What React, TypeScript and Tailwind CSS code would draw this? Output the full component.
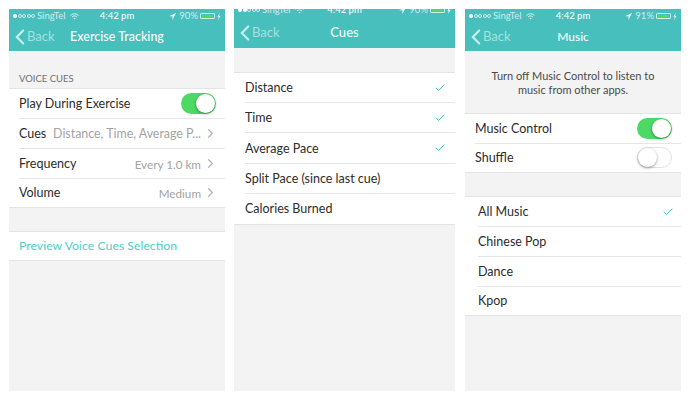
import { ChevronLeft, ChevronRight, Check } from 'lucide-react';

interface StatusProps {
  battery: string;
  fill: number;
  dots: number;
  clipped?: boolean;
}

function StatusBar({ battery, fill, dots, clipped }: StatusProps) {
  return (
    <div className={`flex justify-between pl-[4px] pr-[4px] text-[9.5px] leading-[12px] text-[#cfeeec] ${clipped ? 'h-[7px] items-end overflow-hidden' : 'mt-[1px] h-[12px] items-center'}`}>
      <div className="flex w-[70px] shrink-0 items-center gap-[2px] whitespace-nowrap">
        <div className="flex gap-[0.5px]">
          {[0, 1, 2, 3, 4].map((i) => (
            <span key={i} className={`h-[4px] w-[4px] rounded-full ${i < dots ? 'bg-white' : 'border-[0.5px] border-[#cfeeec]'}`} />
          ))}
        </div>
        <span>SingTel</span>
        <svg width="9" height="7" viewBox="0 0 9 7" className="ml-[3px]">
          <path d="M0.5 2.5a5.5 5.5 0 0 1 8 0M2 4a3.4 3.4 0 0 1 5 0" stroke="#e8f8f6" strokeWidth="0.9" fill="none" />
          <path d="M3.4 5.3a1.5 1.5 0 0 1 2.2 0L4.5 6.6z" fill="#e8f8f6" />
        </svg>
      </div>
      <span className="font-medium text-[#f2fbfa]">4:42 pm</span>
      <div className="flex w-[70px] shrink-0 items-center justify-end gap-[2px] whitespace-nowrap">
        <svg width="7" height="7" viewBox="0 0 7 7" className="mr-[1px]">
          <path d="M7 0L0 3.2h3.4V7z" fill="#f2fbfa" />
        </svg>
        <span>{battery}</span>
        <div className="flex h-[6px] w-[15px] rounded-[1px] border-[0.5px] border-[#cfeeec] p-[0.5px]">
          <div className="h-full bg-[#4cd964]" style={{ width: `${fill}%` }} />
        </div>
        <svg width="4" height="7" viewBox="0 0 4 7">
          <path d="M2.6 0L0.4 3.8h1.3L1.2 7l2.4-4H2.2z" fill="#e8f8f6" />
        </svg>
      </div>
    </div>
  );
}

function NavBar({ title, titleSize, status, height, barHeight }: { title: string; titleSize: string; status: StatusProps; height: string; barHeight: string }) {
  return (
    <div className={`shrink-0 overflow-hidden bg-[#47bfbc] ${height}`}>
      <StatusBar {...status} />
      <div className={`relative flex items-center justify-center ${barHeight}`}>
        <div className="absolute inset-y-0 -left-[2px] flex items-center text-[#a4e2df]">
          <ChevronLeft size={26} strokeWidth={2} className="text-[#c8eeec]" />
          <span className="-ml-[6px] text-[13px]">Back</span>
        </div>
        <span className={`font-medium text-[#f4fcfb] ${titleSize}`}>{title}</span>
      </div>
    </div>
  );
}

function Toggle({ on }: { on: boolean }) {
  return (
    <div className={`flex h-[21px] w-[35px] rounded-full ${on ? 'justify-end bg-[#4cd964] p-[1px]' : 'border border-[#e2e2e2] bg-white'}`}>
      <span className="block h-[19px] w-[19px] rounded-full bg-white shadow-[0_1px_3px_rgba(0,0,0,0.4)]" />
    </div>
  );
}

function Row({ label, children, last, inset, height = 'h-[30px]' }: { label: string; children?: React.ReactNode; last?: boolean; inset: string; height?: string }) {
  return (
    <div className={inset}>
      <div className={`flex ${height} items-center justify-between border-b pr-[9px] text-[12.5px] text-[#2c2c2c] ${last ? 'border-transparent' : 'border-[#e6e6e6]'}`}>
        <span className="shrink-0 whitespace-nowrap pt-[2px]">{label}</span>
        {children}
      </div>
    </div>
  );
}

function Group({ children }: { children: React.ReactNode }) {
  return <div className="border-y border-[#e4e4e4] bg-white">{children}</div>;
}

function Disclosure({ value, size = 'text-[11.7px]' }: { value: string; size?: string }) {
  return (
    <div className={`flex items-center justify-end gap-[2px] whitespace-nowrap text-[#a3a3a3] ${size}`}>
      <span className="pt-[2px]">{value}</span>
      <ChevronRight size={15} strokeWidth={2} className="-mr-[2px] shrink-0 text-[#b5b5b5]" />
    </div>
  );
}

const tick = <Check size={12} strokeWidth={2} className="text-[#47bfbc]" />;
const musicTick = <Check size={12} strokeWidth={2} className="-mr-[2px] text-[#47bfbc]" />;

export default function App() {
  return (
    <div className="flex h-[400px] w-[690px] gap-[9px] bg-white pl-[9px] pt-[9px] font-['Lato','Noto_Sans',sans-serif] antialiased">
      {/* Exercise tracking */}
      <div className="flex h-[382px] w-[216px] flex-col bg-[#f3f3f3]">
        <NavBar title="Exercise Tracking" titleSize="text-[12.5px]" height="h-[42px]" barHeight="h-[30px]" status={{ battery: '90%', fill: 90, dots: 1 }} />
        <div className="flex h-[37px] items-end pb-[2px] pl-[10px] text-[9.5px] text-[#6f6f6f]">VOICE CUES</div>
        <Group>
          <Row label="Play During Exercise" inset="ml-[10px]">
            <Toggle on />
          </Row>
          <Row label="Cues" inset="ml-[10px]">
            <Disclosure value="Distance, Time, Average P..." size="text-[12.4px]" />
          </Row>
          <Row label="Frequency" inset="ml-[10px]">
            <Disclosure value="Every 1.0 km" />
          </Row>
          <Row label="Volume" inset="ml-[10px]" last height="h-[28px]">
            <Disclosure value="Medium" />
          </Row>
        </Group>
        <div className="h-[23px]" />
        <div className="flex h-[30px] items-center border-y border-[#e4e4e4] bg-white pl-[10px] text-[12.3px] text-[#52cdc8]">Preview Voice Cues Selection</div>
      </div>

      {/* Cues */}
      <div className="flex h-[382px] w-[221px] flex-col bg-[#f3f3f3]">
        <NavBar title="Cues" titleSize="text-[13px]" height="h-[39px]" barHeight="h-[34px]" status={{ battery: '90%', fill: 90, dots: 2, clipped: true }} />
        <div className="h-[24px]" />
        <Group>
          <Row label="Distance" inset="ml-[11px]">{tick}</Row>
          <Row label="Time" inset="ml-[11px]">{tick}</Row>
          <Row label="Average Pace" inset="ml-[11px]" height="h-[31px]">{tick}</Row>
          <Row label="Split Pace (since last cue)" inset="ml-[11px]" />
          <Row label="Calories Burned" inset="ml-[11px]" last />
        </Group>
      </div>

      {/* Music */}
      <div className="ml-[1px] flex h-[382px] w-[216px] flex-col bg-[#f3f3f3]">
        <NavBar title="Music" titleSize="text-[12px]" height="h-[42px]" barHeight="h-[30px]" status={{ battery: '91%', fill: 91, dots: 1 }} />
        <div className="flex h-[62px] items-center justify-center px-[10px] pt-[2px] text-center text-[11px] leading-[14px] text-[#4a4a4a]">
          <p>
            Turn off Music Control to listen to
            <br />
            music from other apps.
          </p>
        </div>
        <Group>
          <Row label="Music Control" inset="ml-[10px]">
            <Toggle on />
          </Row>
          <Row label="Shuffle" inset="ml-[10px]" last height="h-[28px]">
            <Toggle on={false} />
          </Row>
        </Group>
        <div className="h-[23px]" />
        <Group>
          <Row label="All Music" inset="ml-[10px] pl-[3px]">{musicTick}</Row>
          <Row label="Chinese Pop" inset="ml-[10px] pl-[3px]" />
          <Row label="Dance" inset="ml-[10px] pl-[3px]" />
          <Row label="Kpop" inset="ml-[10px] pl-[3px]" last height="h-[28px]" />
        </Group>
      </div>
    </div>
  );
}
